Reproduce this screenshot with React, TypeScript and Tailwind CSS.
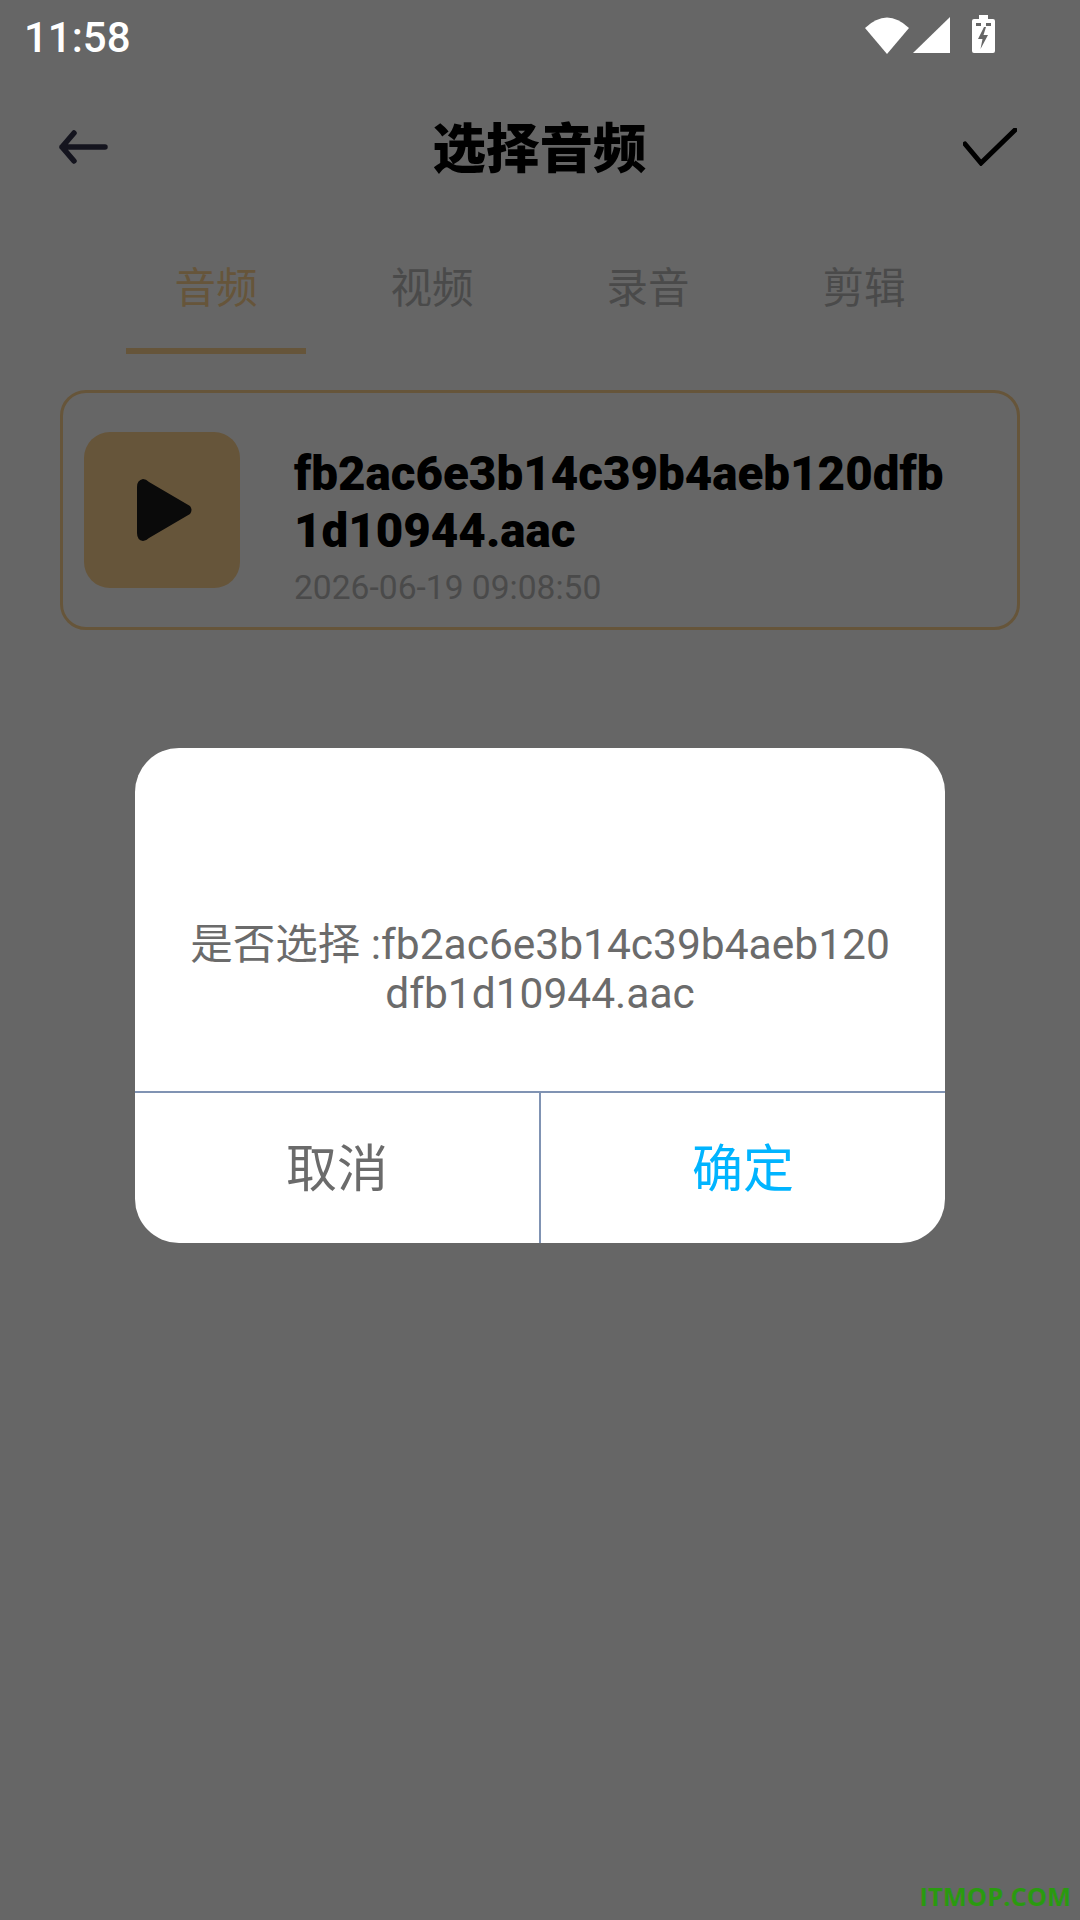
const cjk = '"Noto Sans CJK SC", sans-serif';

function StatusBar() {
  return (
    <div className="relative z-20 flex h-[72px] items-start justify-between pl-[24px] pr-[84px] pt-[12.500px] text-white">
      <span className="text-[42px] leading-[50px] font-medium font-['Roboto',sans-serif]">11:58</span>
      <svg width="132" height="40" viewBox="0 0 132 40" className="mt-[2.500px]" fill="white">
        {/* wifi */}
        <path d="M1 13 Q23 -8 45 13 L23 39 Z" />
        {/* signal */}
        <path d="M86 2 V38 H49 Z" />
        {/* battery */}
        <path
          fillRule="evenodd"
          d="M115 0 H124 V4 H129 Q131 4 131 6 V36 Q131 38 129 38 H110 Q108 38 108 36 V6 Q108 4 110 4 H115 Z M112 8 V11 H117 V8 Z M122 8 V11 H127 V8 Z M120 12 L114 24 H118.500 L116.500 34 L124 20 H119.500 L122 12 Z"
        />
      </svg>
    </div>
  );
}

function Header() {
  return (
    <div className="flex h-[150px] items-center justify-between pl-[58px] pr-[63px]">
      <svg width="50" height="34" viewBox="0 0 50 34" fill="none" stroke="#33334d" strokeWidth="5.500" strokeLinecap="round" strokeLinejoin="round">
        <path d="M47 17 H4 M16 3 L4 17 L16 31" />
      </svg>
      <h1 className="mb-[5px] ml-[8px] text-[53.500px] leading-none font-black text-black" style={{ fontFamily: cjk }}>
        选择音频
      </h1>
      <svg width="54" height="38" viewBox="0 0 54 38" fill="none" stroke="#000" strokeWidth="5" strokeLinecap="round" strokeLinejoin="miter">
        <path d="M2 16 L18 35 L52 2" />
      </svg>
    </div>
  );
}

const tabs = ['音频', '视频', '录音', '剪辑'];

function Tabs() {
  return (
    <div className="mx-[108px] flex h-[132px]">
      {tabs.map((tab, i) => (
        <div key={tab} className="flex h-full w-[216px] flex-col items-center">
          <div
            className={`flex flex-1 items-center justify-center pt-[2px] text-[41.500px] leading-none ${i === 0 ? 'text-[#ffd491]' : 'text-[#b9b9b9]'}`}
            style={{ fontFamily: cjk }}
          >
            {tab}
          </div>
          <div className={`h-[6px] w-[180px] ${i === 0 ? 'bg-[#ffd491]' : ''}`} />
        </div>
      ))}
    </div>
  );
}

function AudioCard() {
  return (
    <div className="mx-[60px] mt-[36px] flex h-[240px] gap-[54px] rounded-[26px] border-[3px] border-[#ffd491] pl-[21px]">
      <div className="flex h-[156px] w-[156px] shrink-0 items-center justify-center self-center rounded-[26px] bg-[#ffd491]">
        <svg width="56" height="62" viewBox="0 0 56 62" className="ml-[6px]">
          <path
            d="M0 8 Q0 1 6 0 Q9 0 12 3 L53 27 Q56 31 53 35 L12 59 Q9 62 6 62 Q0 61 0 54 Z"
            fill="#191919"
          />
        </svg>
      </div>
      <div className="mt-[53px] w-[660px] self-start">
        <div className="text-[47.500px] leading-[57px] font-black break-all text-black font-['Roboto',sans-serif]">
          fb2ac6e3b14c39b4aeb120dfb1d10944.aac
        </div>
        <div className="mt-[8px] text-[33.600px] leading-[40px] text-[#b9b9b9] font-['Roboto',sans-serif]">
          2026-06-19 09:08:50
        </div>
      </div>
    </div>
  );
}

function ConfirmDialog() {
  return (
    <div className="absolute top-[748px] left-[135px] z-20 flex h-[495px] w-[810px] flex-col overflow-hidden rounded-[44px] bg-white">
      <div
        className="h-[345px] border-b-2 border-[#8093b3] px-[50px] pt-[172px] text-center text-[42.500px] leading-[49px] break-all text-[#6b6b6b]"
        style={{ fontFamily: `Roboto, ${cjk}` }}
      >
        是否选择 :fb2ac6e3b14c39b4aeb120dfb1d10944.aac
      </div>
      <div className="flex flex-1 text-[51px] leading-none" style={{ fontFamily: cjk }}>
        <button className="flex flex-1 items-center justify-center border-r-2 border-[#8093b3] pb-[5px] text-[#6b6b6b]">取消</button>
        <button className="flex flex-1 items-center justify-center pb-[5px] text-[#00b4ff]">确定</button>
      </div>
    </div>
  );
}

export default function App() {
  return (
    <div className="relative h-[1920px] w-[1080px] overflow-hidden bg-white">
      <StatusBar />
      <Header />
      <Tabs />
      <AudioCard />
      {/* dim layer behind the dialog */}
      <div className="absolute inset-0 z-10 bg-black/60" />
      <ConfirmDialog />
      <span className="absolute right-[9px] bottom-[11px] z-20 text-[25.500px] leading-none font-bold text-[#2a9a10] font-['Open_Sans',sans-serif]">
        ITMOP.COM
      </span>
    </div>
  );
}
